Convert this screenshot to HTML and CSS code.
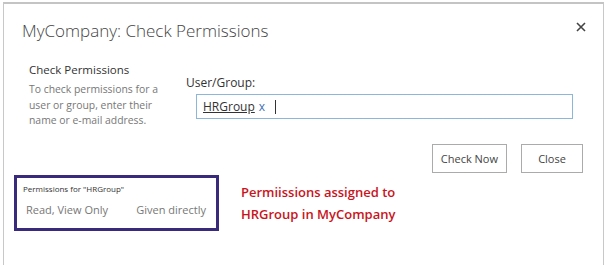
FILE: index.html
```html
<!DOCTYPE html>
<html lang="en">
<head>
    <meta charset="UTF-8">
    <title>Check Permissions</title>
    <link rel="stylesheet" href="styles.css">
</head>
<body>
    <div class="dialog">
        <div class="dialog-header">
            <h1 class="dialog-title">MyCompany: Check Permissions</h1>
            <svg class="dialog-close" width="10" height="10" viewBox="0 0 10 10">
                <path d="M1 1 L9 9 M9 1 L1 9" stroke="#444" stroke-width="1.6" fill="none"/>
            </svg>
        </div>

        <!-- User picker -->
        <div class="form-row">
            <div class="form-info">
                <h2>Check Permissions</h2>
                <p>To check permissions for a user or group, enter their name or e-mail address.</p>
            </div>
            <div class="form-field">
                <label>User/Group:</label>
                <div class="picker">
                    <span class="picker-item">HRGroup</span>
                    <span class="picker-remove">x</span>
                    <span class="picker-caret"></span>
                </div>
            </div>
        </div>

        <div class="actions">
            <button class="btn">Check Now</button>
            <button class="btn btn-close">Close</button>
        </div>

        <!-- Result -->
        <div class="result-row">
            <div class="result-box">
                <div class="result-title">Permissions for "HRGroup"</div>
                <div class="result-line">
                    <span>Read, View Only</span>
                    <span>Given directly</span>
                </div>
            </div>
            <div class="note">
                Permiissions assigned to<br>
                HRGroup in MyCompany
            </div>
        </div>
    </div>
</body>
</html>
```

FILE: styles.css
```css
body {
    margin: 0;
    padding: 2px 2px 0 3px;
    background: #fff;
    font-family: "Open Sans", Arial, sans-serif;
    height: 265px;
    box-sizing: border-box;
    overflow: hidden;
}

/* Dialog frame */
.dialog {
    border: 1px solid #c8c8c8;
    border-top: 2px solid #c4c4c4;
    border-bottom: none;
    height: 100%;
    box-sizing: border-box;
}

.dialog-header {
    display: flex;
    justify-content: space-between;
    align-items: flex-start;
    padding: 15px 17px 0 18px;
}

.dialog-title {
    margin: 0;
    font-size: 17px;
    font-weight: 300;
    color: #444;
}

.dialog-close {
    margin-top: 3px;
}

/* Form section */
.form-row {
    display: flex;
    padding: 20px 0 0 25px;
}

.form-info {
    width: 150px;
}

.form-info h2 {
    margin: 0;
    font-size: 11.5px;
    font-weight: 400;
    color: #333;
}

.form-info p {
    margin: 5px 0 0;
    font-size: 10.4px;
    line-height: 15.5px;
    color: #777;
}

.form-field {
    padding-top: 12px;
    margin-left: 7px;
}

.form-field label {
    display: block;
    font-size: 12px;
    color: #333;
}

.picker {
    display: flex;
    align-items: center;
    width: 377px;
    height: 25px;
    box-sizing: border-box;
    margin: 3px 0 0 10px;
    padding: 0 6px;
    border: 1px solid #8db6d9;
    font-size: 12px;
}

.picker-item {
    color: #333;
    text-decoration: underline;
}

.picker-remove {
    color: #3d6fb4;
    margin-left: 4px;
}

.picker-caret {
    width: 1px;
    height: 14px;
    background: #333;
    margin-left: 10px;
}

/* Buttons */
.actions {
    display: flex;
    justify-content: flex-end;
    gap: 14px;
    padding: 15px 20px 0 0;
}

.btn {
    height: 29px;
    padding: 0 8px;
    border: 1px solid #ababab;
    background: #fff;
    font-family: "Open Sans", Arial, sans-serif;
    font-size: 11px;
    color: #444;
}

.btn-close {
    width: 62px;
}

/* Result section */
.result-row {
    display: flex;
    align-items: flex-start;
    padding: 2px 0 0 10px;
}

.result-box {
    width: 205px;
    height: 56px;
    box-sizing: border-box;
    border: 3px solid #3a2a7c;
    padding: 5px 0 0 6px;
}

.result-title {
    font-size: 8px;
    color: #333;
}

.result-line {
    display: flex;
    justify-content: space-between;
    padding: 8px 10px 0 3px;
    font-size: 11px;
    color: #777;
}

.note {
    margin: 6px 0 0 22px;
    font-size: 13px;
    font-weight: 600;
    line-height: 22px;
    color: #c8141c;
}
```
